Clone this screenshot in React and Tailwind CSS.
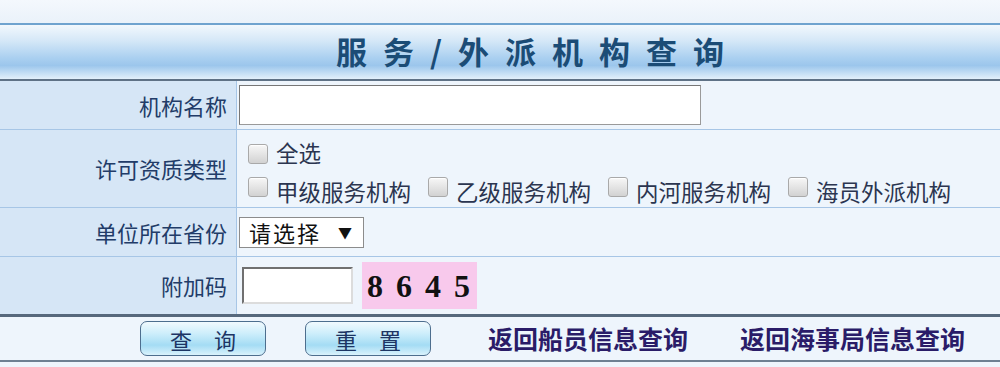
const cjk = { fontFamily: '"Noto Sans CJK SC", "Noto Sans", sans-serif' };

function Box() {
  return (
    <span className="inline-block w-[20px] h-[20px] shrink-0 rounded-[3px] border border-[#a9a9a9] bg-gradient-to-b from-[#f7f7f7] to-[#d2d2d2] shadow-[inset_0_1px_1px_rgba(255,255,255,0.9)]" />
  );
}

function Check({ label, top }) {
  return (
    <label className={`flex gap-[8px] ${top ? 'items-start' : 'items-center'}`}>
      <span className={top ? 'mt-[1px]' : '-mt-[6px]'}><Box /></span>
      <span className="leading-[30px]">{label}</span>
    </label>
  );
}

function Row({ label, h, children, last }) {
  return (
    <div className={`flex ${h} ${last ? '' : 'border-b border-[#a7c6e6]'}`}>
      <div className="w-[237px] shrink-0 bg-[#d6e6f6] border-r border-[#a7c6e6] flex items-center justify-end pr-[9px] text-[22px] text-[#223c68]">
        {label}
      </div>
      <div className="flex-1 bg-[#eef5fc] flex items-center pl-[2px]">{children}</div>
    </div>
  );
}

export default function App() {
  return (
    <div className="w-[1000px] h-[367px] bg-[#eef5fc] overflow-hidden" style={cjk}>
      <div className="h-[23px] bg-gradient-to-b from-[#f4f8fd] to-[#eaf2fa]" />
      <div className="h-[56px] border-t-2 border-[#6fa3cf] bg-[linear-gradient(to_bottom,#f2f8fd_0%,#d4e7f7_30%,#a9cff0_62%,#9cc6ec_75%,#c7e0f5_90%,#e3f0fb_100%)] flex items-center justify-center pl-[76px] pb-[4px]">
        <h1 className="text-[31px] font-bold text-[#1b4c76] tracking-[16px] leading-none">服务/外派机构查询</h1>
      </div>
      <div className="h-[2px] bg-[#5f7286]" />

      <Row label="机构名称" h="h-[49px]">
        <input type="text" className="w-[462px] h-[40px] bg-white border border-[#9a9a9a] border-t-[#777] border-l-[#777] outline-none" />
      </Row>

      <Row label="许可资质类型" h="h-[78px]">
        <div className="flex flex-col gap-[4px] pl-[9px] text-[22.5px] text-[#2b3550] pt-[6px]">
          <Check label="全选" top />
          <div className="flex items-center gap-[17px]">
            <Check label="甲级服务机构" />
            <Check label="乙级服务机构" />
            <Check label="内河服务机构" />
            <Check label="海员外派机构" />
          </div>
        </div>
      </Row>

      <Row label="单位所在省份" h="h-[49px]">
        <div className="w-[125px] h-[31px] bg-white border border-[#8c8c8c] flex items-center pl-[9px] gap-[17px] text-[22px] text-[#111]">
          <span className="tracking-[2px]">请选择</span>
          <span className="text-[14px]">▼</span>
        </div>
      </Row>

      <Row label="附加码" h="h-[57px]" last>
        <div className="flex items-center gap-[9px] pl-[3px]">
          <input type="text" className="w-[111px] h-[37px] bg-white border-2 border-[#dcdcdc] border-t-[#707070] border-l-[#707070] outline-none" />
          <div className="w-[115px] h-[47px] bg-[#f8c9ec] flex items-center pl-[5px] text-[32px] font-bold text-[#111] tracking-[13px]" style={{ fontFamily: '"Liberation Serif", serif' }}>
            8645
          </div>
        </div>
      </Row>

      <div className="h-[3px] bg-[#56687c]" />
      <div className="h-[43px] flex items-center pl-[140px]">
        <button className="w-[126px] h-[35px] rounded-[7px] border border-[#4d6e8e] bg-[linear-gradient(to_bottom,#f1fafe_0%,#cdeefb_35%,#a4dcf4_70%,#d9f2fc_100%)] text-[22px] text-[#1d3564] tracking-[22px] pl-[22px] leading-none">
          查询
        </button>
        <button className="ml-[39px] w-[126px] h-[35px] rounded-[7px] border border-[#4d6e8e] bg-[linear-gradient(to_bottom,#f1fafe_0%,#cdeefb_35%,#a4dcf4_70%,#d9f2fc_100%)] text-[22px] text-[#1d3564] tracking-[22px] pl-[22px] leading-none">
          重置
        </button>
        <a className="ml-[57px] text-[25px] font-bold text-[#2a1c68]">返回船员信息查询</a>
        <a className="ml-[52px] text-[25px] font-bold text-[#2a1c68]">返回海事局信息查询</a>
      </div>
      <div className="h-[2px] bg-[#6e8092]" />
    </div>
  );
}
